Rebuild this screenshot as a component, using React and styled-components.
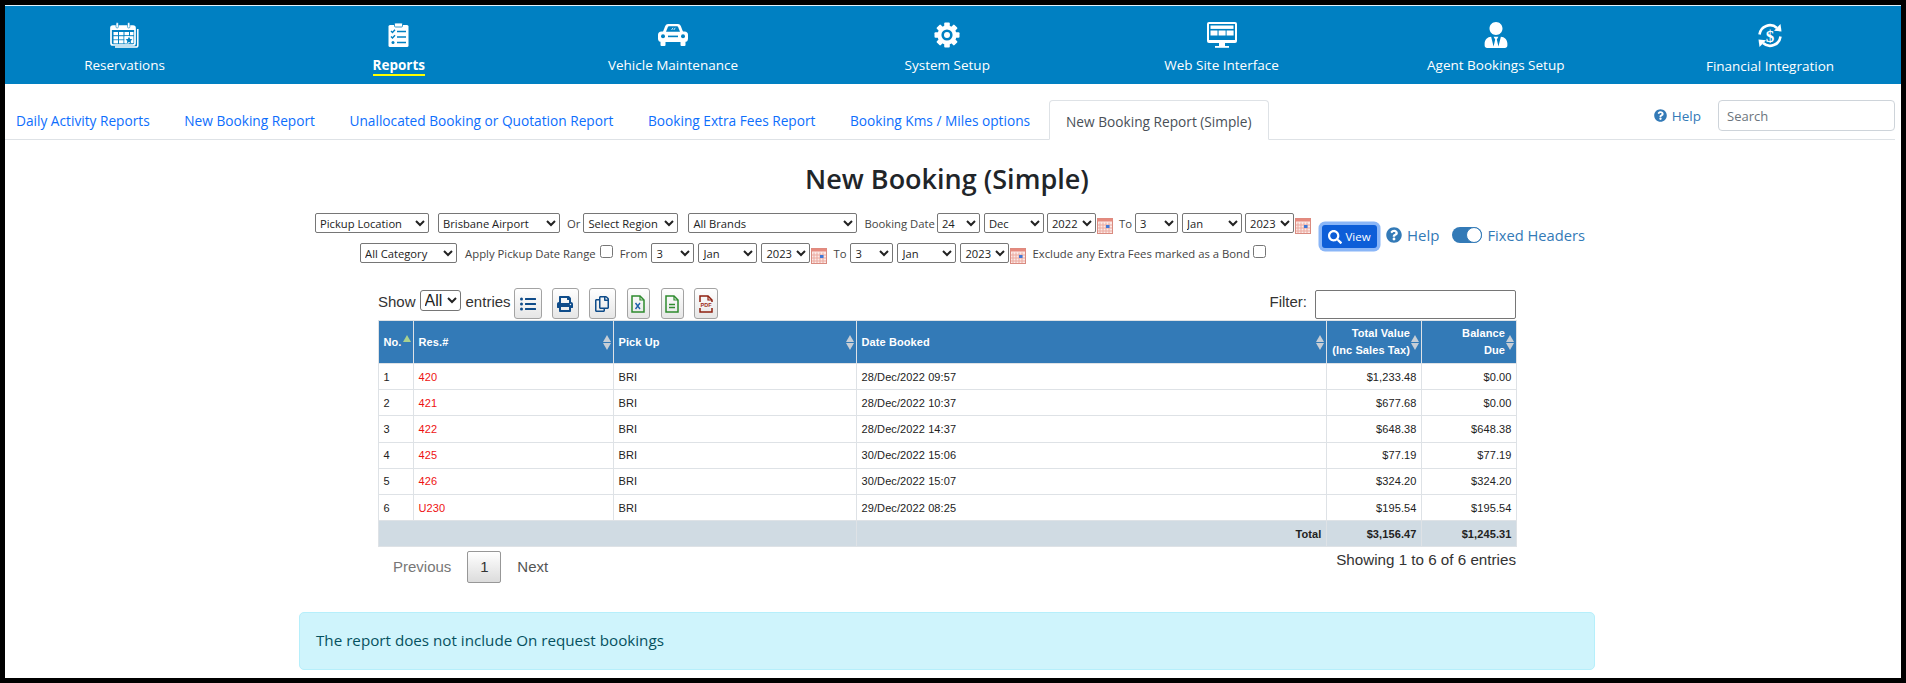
import React from "react";
import styled, { createGlobalStyle } from "styled-components";
import {
  FaUserTie,
  FaQuestionCircle,
  FaSearch,
  FaListUl,
  FaPrint,
  FaRegCopy,
} from "react-icons/fa";

const SANS = `"Open Sans", "Noto Sans", sans-serif`;
const ARIAL = `"Liberation Sans", Arial, sans-serif`;

const GlobalStyle = createGlobalStyle`
  html, body {
    margin: 0;
    height: 683px;
    overflow: hidden;
    background: #000;
  }
  #root {
    box-sizing: border-box;
    height: 683px;
    padding: 5px;
  }
`;

const CalendarIcon = () => (
  <svg width="29" height="26" viewBox="0 0 29 26">
    <path d="M27.8 7v16.5a1.6 1.6 0 0 1-1.6 1.6H5" fill="none" stroke="#fff" strokeWidth="1.5" />
    <rect x="1" y="4" width="24" height="19" rx="2" fill="none" stroke="#fff" strokeWidth="1.7" />
    <rect x="1" y="4" width="24" height="4" fill="#fff" />
    <rect x="6" y="0.5" width="2.4" height="5.5" rx="1.2" fill="#fff" stroke="#0080c2" strokeWidth="0.6" />
    <rect x="17.5" y="0.5" width="2.4" height="5.5" rx="1.2" fill="#fff" stroke="#0080c2" strokeWidth="0.6" />
    {[3.5, 9, 14.5].map((x) =>
      [10, 14.2, 18.2].map((y) => <rect key={x + "-" + y} x={x} y={y} width="4.5" height="3.2" fill="#fff" />)
    )}
    <rect x="20" y="10" width="3.5" height="3.2" fill="#fff" />
    <rect x="14.5" y="14.2" width="9" height="7" fill="#fff" />
    <path d="M19 14.8l1.1 2.2 2.3.3-1.7 1.6.5 2.3-2.2-1.1-2.2 1.1.5-2.3-1.7-1.6 2.3-.3z" fill="#0080c2" />
  </svg>
);

const ClipboardIcon = () => (
  <svg width="21" height="24" viewBox="0 0 21 24">
    <rect x="0.5" y="2" width="20" height="22" rx="1.5" fill="#fff" />
    <rect x="6.5" y="0" width="8" height="4" rx="1" fill="#fff" stroke="#0080c2" strokeWidth="0.8" />
    <g fill="none" stroke="#0080c2" strokeWidth="1.4">
      <path d="M3 8l1.5 1.5L7 6.8M3 13.5L4.5 15 7 12.3" />
      <path d="M9 8.5h9M9 14h9M9 19.5h9" />
    </g>
    <circle cx="5" cy="19.5" r="1.5" fill="#0080c2" />
  </svg>
);

const CarIcon = () => (
  <svg width="30" height="23" viewBox="0 0 30 23">
    <rect x="0" y="8.5" width="30" height="10.5" rx="3.5" fill="#fff" />
    <path d="M4.5 10L7.2 3Q8 1 10 1h10q2 0 2.8 2L25.5 10z" fill="#fff" />
    <path d="M8 8.8l1.9-4.8q.3-.7 1-.7h8.2q.7 0 1 .7L22 8.8z" fill="#0080c2" />
    <path d="M13.6 7l1.4-2.2M15.8 7l1.4-2.2" stroke="#fff" strokeWidth="0.8" />
    <circle cx="5" cy="13.3" r="2" fill="#0080c2" />
    <circle cx="25" cy="13.3" r="2" fill="#0080c2" />
    <rect x="10" y="12.6" width="10" height="1.6" fill="#0080c2" />
    <rect x="2.5" y="18" width="5" height="5" rx="1" fill="#fff" />
    <rect x="22.5" y="18" width="5" height="5" rx="1" fill="#fff" />
  </svg>
);

const GearIcon = () => (
  <svg width="26" height="26" viewBox="0 0 26 26">
    <g fill="#fff">
      {[0, 45, 90, 135, 180, 225, 270, 315].map((a) => (
        <rect key={a} x="10.2" y="0.5" width="5.6" height="6" rx="1" transform={`rotate(${a} 13 13)`} />
      ))}
    </g>
    <circle cx="13" cy="13" r="7.6" fill="none" stroke="#fff" strokeWidth="4" />
    <circle cx="13" cy="13" r="3" fill="#fff" />
  </svg>
);

const MonitorIcon = () => (
  <svg width="30" height="26" viewBox="0 0 30 26">
    <rect x="0" y="0" width="30" height="21" rx="2" fill="#fff" />
    <rect x="2" y="2" width="26" height="16" fill="#0080c2" />
    <rect x="3.5" y="3.5" width="23" height="3.4" fill="#fff" />
    <rect x="3.5" y="8.5" width="7" height="5" fill="#fff" />
    <rect x="11.6" y="8.5" width="7" height="5" fill="#fff" />
    <rect x="19.6" y="8.5" width="7" height="5" fill="#fff" />
    <rect x="12" y="21" width="6" height="3" fill="#fff" />
    <rect x="8" y="24" width="14" height="1.8" fill="#fff" />
  </svg>
);

const FinanceIcon = () => (
  <svg width="26" height="25" viewBox="0 0 26 25">
    <g fill="none" stroke="#fff" strokeWidth="2.6">
      <path d="M2.5 11.5A10.5 10.5 0 0 1 20 5" />
      <path d="M23.5 13.5A10.5 10.5 0 0 1 6 20" />
    </g>
    <path d="M17 7.8L24.5 8.5 23.5 1z" fill="#fff" />
    <path d="M9 17.2L1.5 16.5 2.5 24z" fill="#fff" />
    <text x="13" y="18.5" textAnchor="middle" fontFamily='"Liberation Serif", serif' fontWeight="700" fontSize="17" fill="#fff">
      $
    </text>
  </svg>
);

const DatePickerIcon = () => (
  <svg width="16" height="16" viewBox="0 0 16 16">
    <rect x="0.5" y="0.5" width="15" height="15" fill="#fbe9e6" stroke="#d98b80" />
    <rect x="0.5" y="0.5" width="15" height="3" fill="#e68a7e" />
    <path d="M3 4.5V15M6 4.5V15M9 4.5V15M12 4.5V15M1 7h14M1 10h14M1 13h14" stroke="#eba99f" strokeWidth="1" />
    <rect x="9" y="7" width="3.5" height="3" fill="#3f78d8" />
  </svg>
);

const FileIcon = ({ color, children }) => (
  <svg width="14" height="18" viewBox="0 0 14 18">
    <path d="M1 1h8l4 4v12H1z" fill="none" stroke={color} strokeWidth="1.5" />
    <path d="M9 1v4h4" fill="none" stroke={color} strokeWidth="1.2" />
    {children}
  </svg>
);

const MENU = [
  { label: "Reservations", icon: <CalendarIcon /> },
  { label: "Reports", icon: <ClipboardIcon />, active: true },
  { label: "Vehicle Maintenance", icon: <CarIcon /> },
  { label: "System Setup", icon: <GearIcon /> },
  { label: "Web Site Interface", icon: <MonitorIcon /> },
  { label: "Agent Bookings Setup", icon: <FaUserTie size={26} color="#fff" /> },
  { label: "Financial Integration", icon: <FinanceIcon />, low: true },
];

const TABS = [
  "Daily Activity Reports",
  "New Booking Report",
  "Unallocated Booking or Quotation Report",
  "Booking Extra Fees Report",
  "Booking Kms / Miles options",
];

const ROWS = [
  ["1", "420", "BRI", "28/Dec/2022 09:57", "$1,233.48", "$0.00"],
  ["2", "421", "BRI", "28/Dec/2022 10:37", "$677.68", "$0.00"],
  ["3", "422", "BRI", "28/Dec/2022 14:37", "$648.38", "$648.38"],
  ["4", "425", "BRI", "30/Dec/2022 15:06", "$77.19", "$77.19"],
  ["5", "426", "BRI", "30/Dec/2022 15:07", "$324.20", "$324.20"],
  ["6", "U230", "BRI", "29/Dec/2022 08:25", "$195.54", "$195.54"],
];

const Sel = ({ w, ml, children }) => (
  <FilterSelect $w={w} $ml={ml}>
    <option>{children}</option>
  </FilterSelect>
);

export default function App() {
  return (
    <Page>
      <GlobalStyle />
      <NavBar>
        {MENU.map((item) => (
          <NavItem key={item.label} $low={item.low}>
            <NavIcon>{item.icon}</NavIcon>
            <NavLabel $active={item.active}>{item.label}</NavLabel>
          </NavItem>
        ))}
      </NavBar>

      <TabsRow>
        {TABS.map((tab) => (
          <TabLink key={tab}>{tab}</TabLink>
        ))}
        <ActiveTab>New Booking Report (Simple)</ActiveTab>
        <TabsRight>
          <TopHelp>
            <FaQuestionCircle size={13} />
            Help
          </TopHelp>
          <SearchInput placeholder="Search" />
        </TabsRight>
      </TabsRow>

      <Main>
        <Title>New Booking (Simple)</Title>

        <FilterBar>
          <FilterRows>
            <FilterRow>
              <Sel w={114}>Pickup Location</Sel>
              <Sel w={122} ml={9}>Brisbane Airport</Sel>
              <FilterLabel $ml={7}>Or</FilterLabel>
              <Sel w={95} ml={3}>Select Region</Sel>
              <Sel w={169} ml={10}>All Brands</Sel>
              <FilterLabel $ml={7}>Booking Date</FilterLabel>
              <Sel w={43} ml={2}>24</Sel>
              <Sel w={60} ml={4}>Dec</Sel>
              <Sel w={49} ml={3}>2022</Sel>
              <CalSlot><DatePickerIcon /></CalSlot>
              <FilterLabel $ml={6}>To</FilterLabel>
              <Sel w={43} ml={3}>3</Sel>
              <Sel w={60} ml={4}>Jan</Sel>
              <Sel w={49} ml={3}>2023</Sel>
              <CalSlot><DatePickerIcon /></CalSlot>
            </FilterRow>
            <FilterRow>
              <Sel w={97}>All Category</Sel>
              <FilterLabel $ml={8}>Apply Pickup Date Range</FilterLabel>
              <FilterCheck type="checkbox" $ml={4} />
              <FilterLabel $ml={7}>From</FilterLabel>
              <Sel w={43} ml={4}>3</Sel>
              <Sel w={59} ml={4}>Jan</Sel>
              <Sel w={49} ml={4}>2023</Sel>
              <CalSlot><DatePickerIcon /></CalSlot>
              <FilterLabel $ml={6}>To</FilterLabel>
              <Sel w={43} ml={4}>3</Sel>
              <Sel w={59} ml={4}>Jan</Sel>
              <Sel w={49} ml={4}>2023</Sel>
              <CalSlot><DatePickerIcon /></CalSlot>
              <FilterLabel $ml={6}>Exclude any Extra Fees marked as a Bond</FilterLabel>
              <FilterCheck type="checkbox" $ml={3} />
            </FilterRow>
          </FilterRows>
          <FilterActions>
            <ViewButton>
              <FaSearch size={14} />
              View
            </ViewButton>
            <ActionHelp>
              <FaQuestionCircle size={16} />
              Help
            </ActionHelp>
            <Toggle />
            <ToggleLabel>Fixed Headers</ToggleLabel>
          </FilterActions>
        </FilterBar>

        <TableWrap>
          <Toolbar>
            <ToolGroup>
              <ShowLabel>Show</ShowLabel>
              <EntriesSelect>
                <option>All</option>
              </EntriesSelect>
              <ShowLabel>entries</ShowLabel>
              <ToolButton $w={28} $ml={3}><FaListUl size={16} color="#0f4c8a" /></ToolButton>
              <ToolButton $w={27} $ml={10}><FaPrint size={16} color="#0f4c8a" /></ToolButton>
              <ToolButton $w={27} $ml={10}><FaRegCopy size={16} color="#0f4c8a" /></ToolButton>
              <ToolButton $w={23} $ml={11}>
                <FileIcon color="#2e8b2e">
                  <path d="M4.5 8l4.5 6M9 8l-4.5 6" stroke="#1b5fa8" strokeWidth="1.4" />
                </FileIcon>
              </ToolButton>
              <ToolButton $w={23} $ml={11}>
                <FileIcon color="#2e8b2e">
                  <path d="M4 9.5h6M4 12.5h6" stroke="#2e8b2e" strokeWidth="1.3" />
                </FileIcon>
              </ToolButton>
              <ToolButton $w={24} $ml={10}>
                <FileIcon color="#8f2010">
                  <rect x="0" y="7" width="14" height="6" fill="#f3f3f3" />
                  <text x="7" y="12" textAnchor="middle" fontFamily={ARIAL} fontWeight="700" fontSize="5.5" fill="#a02a18">
                    PDF
                  </text>
                </FileIcon>
              </ToolButton>
            </ToolGroup>
            <ToolGroup>
              <ShowLabel>Filter:</ShowLabel>
              <FilterInput />
            </ToolGroup>
          </Toolbar>

          <ReportTable>
            <colgroup>
              <col style={{ width: 35 }} />
              <col style={{ width: 200 }} />
              <col style={{ width: 243 }} />
              <col style={{ width: 470 }} />
              <col style={{ width: 95 }} />
              <col style={{ width: 95 }} />
            </colgroup>
            <thead>
              <tr>
                <HeadCell $sort="asc">No.</HeadCell>
                <HeadCell>Res.#</HeadCell>
                <HeadCell>Pick Up</HeadCell>
                <HeadCell>Date Booked</HeadCell>
                <HeadCell $right>
                  Total Value
                  <br />
                  (Inc Sales Tax)
                </HeadCell>
                <HeadCell $right>
                  Balance
                  <br />
                  Due
                </HeadCell>
              </tr>
            </thead>
            <tbody>
              {ROWS.map((row) => (
                <tr key={row[0]}>
                  <BodyCell>{row[0]}</BodyCell>
                  <BodyCell $link>{row[1]}</BodyCell>
                  <BodyCell>{row[2]}</BodyCell>
                  <BodyCell>{row[3]}</BodyCell>
                  <BodyCell $right>{row[4]}</BodyCell>
                  <BodyCell $right>{row[5]}</BodyCell>
                </tr>
              ))}
              <tr>
                <TotalCell colSpan={3} />
                <TotalCell $right>Total</TotalCell>
                <TotalCell $right>$3,156.47</TotalCell>
                <TotalCell $right>$1,245.31</TotalCell>
              </tr>
            </tbody>
          </ReportTable>

          <TableFooter>
            <Pagination>
              <PageText>Previous</PageText>
              <PageButton>1</PageButton>
              <PageText $next>Next</PageText>
            </Pagination>
            <Showing>Showing 1 to 6 of 6 entries</Showing>
          </TableFooter>
        </TableWrap>

        <Notice>The report does not include On request bookings</Notice>
      </Main>
    </Page>
  );
}

const Page = styled.div`
  width: 1896px;
  height: 673px;
  background: #fff;
  overflow: hidden;
  font-family: ${SANS};
`;

const NavBar = styled.nav`
  box-sizing: border-box;
  height: 79px;
  display: flex;
  justify-content: space-between;
  padding: 0 21px 0 9.5px;
  background: #0080c2;
  border-top: 1px solid #dff1fb;
`;

const NavItem = styled.div`
  width: 220px;
  display: flex;
  flex-direction: column;
  align-items: center;
  padding-top: ${(p) => (p.$low ? "16px" : "15px")};
`;

const NavIcon = styled.div`
  height: 27px;
  display: flex;
  align-items: center;
  justify-content: center;
`;

const NavLabel = styled.span`
  margin-top: 8px;
  line-height: 18px;
  font-size: 13.5px;
  color: #fff;
  font-weight: ${(p) => (p.$active ? 700 : 400)};
  border-bottom: 2px solid ${(p) => (p.$active ? "#ffff00" : "transparent")};
`;

const TabsRow = styled.div`
  box-sizing: border-box;
  width: 1890px;
  height: 56px;
  display: flex;
  align-items: flex-end;
  padding-left: 11px;
  border-bottom: 1px solid #dee2e6;
`;

const TabLink = styled.a`
  height: 39px;
  display: flex;
  align-items: center;
  padding-top: 2px;
  box-sizing: border-box;
  margin-right: 34.5px;
  font-size: 13.7px;
  color: #0d6efd;
`;

const ActiveTab = styled.a`
  box-sizing: border-box;
  height: 40px;
  margin-bottom: -1px;
  display: flex;
  align-items: center;
  padding: 2px 16.5px 0;
  margin-left: -16px;
  font-size: 13.7px;
  color: #495057;
  background: #fff;
  border: 1px solid #dee2e6;
  border-bottom-color: #fff;
  border-radius: 4px 4px 0 0;
`;

const TabsRight = styled.div`
  margin-left: auto;
  align-self: flex-start;
  padding-top: 16px;
  display: flex;
  align-items: center;
`;

const TopHelp = styled.span`
  display: flex;
  align-items: center;
  gap: 5px;
  margin-right: 17px;
  font-size: 13.5px;
  color: #337ab7;
`;

const SearchInput = styled.input`
  box-sizing: border-box;
  width: 177px;
  height: 31px;
  padding: 0 8px;
  font-family: ${SANS};
  font-size: 13px;
  border: 1px solid #ced4da;
  border-radius: 4px;
  outline: none;

  &::placeholder {
    color: #6c757d;
  }
`;

const Main = styled.main`
  width: 1884px;
  display: flex;
  flex-direction: column;
  align-items: center;
`;

const Title = styled.h2`
  margin: 22px 0 0;
  line-height: 34px;
  font-size: 27px;
  font-weight: 600;
  color: #212529;
`;

const FilterBar = styled.div`
  display: flex;
  align-items: flex-start;
  margin-top: 17px;
  padding-left: 6px;
`;

const FilterRows = styled.div`
  display: flex;
  flex-direction: column;
  align-items: center;
  gap: 10px;
`;

const FilterRow = styled.div`
  height: 20px;
  display: flex;
  align-items: center;
`;

const FilterSelect = styled.select`
  box-sizing: border-box;
  width: ${(p) => p.$w}px;
  height: 20px;
  margin: 0 0 0 ${(p) => p.$ml || 0}px;
  padding: 0;
  font-family: ${SANS};
  font-size: 11.2px;
  color: #222;
  background: #fff;
  border: 1px solid #767676;
  border-radius: 2px;
`;

const FilterLabel = styled.span`
  margin-left: ${(p) => p.$ml}px;
  font-size: 11.3px;
  color: #444;
  white-space: nowrap;
`;

const FilterCheck = styled.input`
  width: 13px;
  height: 13px;
  margin: 0 0 3px ${(p) => p.$ml}px;
`;

const CalSlot = styled.span`
  width: 16px;
  height: 16px;
  margin: 4px 0 0 1px;
  display: block;
`;

const FilterActions = styled.div`
  display: flex;
  align-items: center;
  margin: 12px 0 0 11px;
`;

const ViewButton = styled.button`
  box-sizing: border-box;
  width: 55px;
  height: 23px;
  display: flex;
  align-items: center;
  justify-content: center;
  gap: 3px;
  padding: 0;
  font-family: ${SANS};
  font-size: 11.5px;
  color: #fff;
  background: #0d5ed8;
  border: none;
  border-radius: 3px;
  box-shadow: 0 0 0 3.5px #8ab6f7;
`;

const ActionHelp = styled.span`
  display: flex;
  align-items: center;
  gap: 5px;
  margin: 0 0 3px 9px;
  line-height: 20px;
  font-size: 15px;
  color: #337ab7;
`;

const Toggle = styled.span`
  position: relative;
  box-sizing: border-box;
  width: 30px;
  height: 16px;
  margin: 0 0 3px 13px;
  background: #337ab7;
  border-radius: 8px;

  &::after {
    content: "";
    position: absolute;
    right: 0;
    top: 0;
    width: 16px;
    height: 16px;
    box-sizing: border-box;
    background: #fff;
    border: 1px solid #337ab7;
    border-radius: 50%;
  }
`;

const ToggleLabel = styled.span`
  margin: 0 0 3px 5px;
  line-height: 20px;
  font-size: 14.7px;
  color: #337ab7;
`;

const TableWrap = styled.section`
  width: 1138px;
  margin-top: 25px;
  font-family: ${ARIAL};
`;

const Toolbar = styled.div`
  height: 32px;
  display: flex;
  justify-content: space-between;
`;

const ToolGroup = styled.div`
  display: flex;
  align-items: flex-start;
`;

const ShowLabel = styled.span`
  line-height: 28px;
  font-size: 15px;
  color: #333;
`;

const EntriesSelect = styled.select`
  box-sizing: border-box;
  width: 41px;
  height: 21px;
  margin: 2px 5px 0 4px;
  padding: 0;
  font-family: ${ARIAL};
  font-size: 16px;
  color: #222;
  background: #fff;
  border: 1px solid #767676;
  border-radius: 3px;
`;

const ToolButton = styled.button`
  box-sizing: border-box;
  width: ${(p) => p.$w}px;
  height: 31px;
  margin-left: ${(p) => p.$ml}px;
  padding: 0;
  display: flex;
  align-items: center;
  justify-content: center;
  background: linear-gradient(#ffffff, #e6e6e6);
  border: 1px solid #a3a3a3;
  border-radius: 3px;
`;

const FilterInput = styled.input`
  box-sizing: border-box;
  width: 201px;
  height: 29px;
  margin: 2px 0 0 8px;
  background: #fff;
  border: 1px solid #767676;
  border-radius: 2px;
`;

const ReportTable = styled.table`
  width: 1138px;
  table-layout: fixed;
  border-collapse: collapse;
  font-size: 11px;
  letter-spacing: 0.1px;
`;

const HeadCell = styled.th`
  position: relative;
  height: 42px;
  padding: 0 ${(p) => (p.$right ? "11px" : "4.5px")} 0 4.5px;
  line-height: 17px;
  white-space: nowrap;
  text-align: ${(p) => (p.$right ? "right" : "left")};
  font-weight: 700;
  color: #fff;
  background: #337ab7;
  border: 1px solid #dee2e6;

  &::before {
    content: "";
    position: absolute;
    right: 2px;
    top: 14px;
    border: 4px solid transparent;
    border-top: 0;
    border-bottom: 7px solid ${(p) => (p.$sort ? "#a9d18e" : "#c7ced6")};
  }

  &::after {
    content: "";
    position: absolute;
    right: 2px;
    top: 22px;
    border: 4px solid transparent;
    border-bottom: 0;
    border-top: 7px solid #c7ced6;
    display: ${(p) => (p.$sort ? "none" : "block")};
  }
`;

const BodyCell = styled.td`
  height: 25.2px;
  padding: 0 4.5px;
  text-align: ${(p) => (p.$right ? "right" : "left")};
  color: ${(p) => (p.$link ? "#ee1111" : "#222")};
  border: 1px solid #dee2e6;
`;

const TotalCell = styled.td`
  height: 24.8px;
  padding: 0 4.5px;
  text-align: right;
  font-weight: 700;
  color: #222;
  background: #d0dbe3;
  border: 1px solid #dee2e6;
`;

const TableFooter = styled.div`
  display: flex;
  justify-content: space-between;
  align-items: flex-start;
`;

const Pagination = styled.div`
  display: flex;
  align-items: center;
  margin-top: 4px;
  padding-left: 15px;
  font-size: 15px;
`;

const PageText = styled.span`
  margin-left: ${(p) => (p.$next ? "16px" : 0)};
  margin-right: ${(p) => (p.$next ? 0 : "16px")};
  color: ${(p) => (p.$next ? "#555" : "#777")};
`;

const PageButton = styled.span`
  box-sizing: border-box;
  width: 34px;
  height: 32px;
  display: flex;
  align-items: center;
  justify-content: center;
  color: #333;
  background: linear-gradient(#fff, #dcdcdc);
  border: 1px solid #979797;
  border-radius: 2px;
`;

const Showing = styled.div`
  margin-top: 4px;
  line-height: 18px;
  font-size: 15.2px;
  color: #333;
`;

const Notice = styled.div`
  box-sizing: border-box;
  width: 1296px;
  height: 58px;
  margin-top: 29px;
  display: flex;
  align-items: center;
  padding: 0 16px 2px;
  font-size: 15.2px;
  color: #055160;
  background: #cff4fc;
  border: 1px solid #b6effb;
  border-radius: 5px;
`;
